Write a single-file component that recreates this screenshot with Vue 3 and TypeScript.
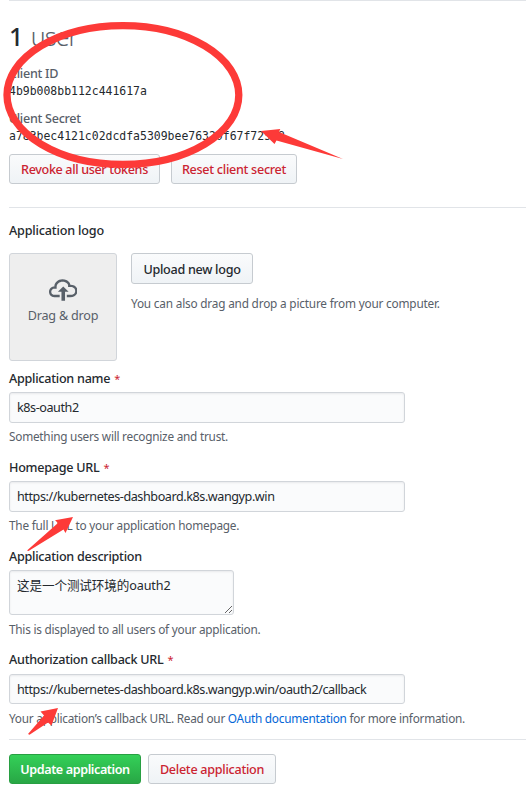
<script setup lang="ts">
interface TextField {
  id: string
  label: string
  value: string
  help: string
}

const clientId = '4b9b008bb112c441617a'
const clientSecret = 'a783bec4121c02dcdfa5309bee76320f67f72508'

const fields: TextField[] = [
  { id: 'name', label: 'Application name', value: 'k8s-oauth2', help: 'Something users will recognize and trust.' },
  { id: 'homepage', label: 'Homepage URL', value: 'https://kubernetes-dashboard.k8s.wangyp.win', help: 'The full URL to your application homepage.' },
]
const description = '这是一个测试环境的oauth2'
const callback = 'https://kubernetes-dashboard.k8s.wangyp.win/oauth2/callback'
</script>

<template>
  <main class="page">
    <section class="credentials">
      <h2 class="count"><strong>1</strong> <span class="count-unit">user</span></h2>
      <dl class="keys">
        <dt>Client ID</dt>
        <dd>{{ clientId }}</dd>
        <dt>Client Secret</dt>
        <dd>{{ clientSecret }}</dd>
      </dl>
      <div class="token-actions">
        <button class="btn danger revoke">Revoke all user tokens</button>
        <button class="btn danger reset">Reset client secret</button>
      </div>
    </section>

    <section class="logo-section">
      <h3 class="label logo-label">Application logo</h3>
      <div class="logo-row">
        <div class="dropzone">
          <svg class="cloud" viewBox="0 2 16 12" width="28.500" height="22">
            <path fill="#586069" d="M7 9H5l3-3 3 3H9v5H7V9zm5-4c0-.44-.91-3-4.500-3C5.080 2 3 3.920 3 6 1.020 6 0 7.520 0 9c0 1.530 1 3 3 3h3v-1.300H3c-1.620 0-1.700-1.420-1.700-1.700 0-.17.05-1.700 1.700-1.700h1.300V6c0-1.390 1.560-2.700 3.200-2.700 2.550 0 3.130 1.550 3.200 1.800v1.200H12c.81 0 2.700.22 2.700 2.200 0 2.090-2.250 2.200-2.700 2.200h-2V12h2c2.080 0 4-1.160 4-3.500C16 6.060 14.080 5 12 5z" />
          </svg>
          <span>Drag &amp; drop</span>
        </div>
        <div class="upload">
          <button class="btn upload-btn">Upload new logo</button>
          <p class="help upload-help">You can also drag and drop a picture from your computer.</p>
        </div>
      </div>
    </section>

    <form class="form" @submit.prevent>
      <div v-for="field in fields" :key="field.id" class="group">
        <label class="label" :for="field.id">{{ field.label }} <i>*</i></label>
        <input :id="field.id" class="control" type="text" :value="field.value" />
        <p class="help" :class="'help-' + field.id">{{ field.help }}</p>
      </div>
      <div class="group group-area">
        <label class="label" for="description">Application description</label>
        <textarea id="description" class="control area" :value="description"></textarea>
        <p class="help help-area">This is displayed to all users of your application.</p>
      </div>
      <div class="group group-callback">
        <label class="label" for="callback">Authorization callback URL <i>*</i></label>
        <input id="callback" class="control" type="text" :value="callback" />
        <p class="help help-callback">Your application’s callback URL. Read our <a>OAuth documentation</a> for more information.</p>
      </div>
      <div class="submit-row">
        <button class="btn primary">Update application</button>
        <button class="btn danger delete">Delete application</button>
      </div>
    </form>

    <svg class="marks" viewBox="0 0 526 798" width="526" height="798">
      <ellipse cx="122.900" cy="95" rx="115.900" ry="69.400" fill="none" stroke="#fd3a38" stroke-width="7.300" />
      <g fill="#fd3a38">
        <path d="M261 131L280.300 129L279 132L343 159L276.500 140.500L274.500 144Z" />
        <path d="M73 517L55 520.300L58 523L27 550.500L28.500 551L63.500 529.500L65.500 533Z" />
        <path d="M58 708L40.500 711.500L44 715.500L28 734L29.500 734.700L48 722.500L51.500 725.500Z" />
      </g>
    </svg>
  </main>
</template>

<style>
body {
  margin: 0;
  background: #fff;
}
</style>

<style scoped>
.page {
  position: relative;
  box-sizing: border-box;
  width: 526px;
  height: 798px;
  overflow: hidden;
  padding-left: 9px;
  color: #24292e;
  font: 12.6px/19px "Noto Sans", "Noto Sans CJK SC", sans-serif;
}
h2, h3, p, dl, dd {
  margin: 0;
}
.credentials {
  box-sizing: border-box;
  height: 208px;
  padding-top: 19px;
  border-top: 1px solid #e1e4e8;
  border-bottom: 1px solid #e1e4e8;
}
.count {
  height: 32px;
  font-size: 25px;
  line-height: 32px;
  font-weight: 400;
}
.count strong {
  font-weight: 500;
}
.count-unit {
  margin-left: 1px;
  color: #586069;
  font-weight: 300;
  letter-spacing: -0.9px;
}
.keys {
  height: 102px;
  padding-top: 13px;
  box-sizing: border-box;
}
.keys dt {
  height: 18px;
  line-height: 18px;
  color: #586069;
  font-weight: 500;
  letter-spacing: -0.28px;
}
.keys dd {
  height: 17px;
  margin-bottom: 10px;
  line-height: 17px;
  font-family: "DejaVu Sans Mono", monospace;
  font-size: 11.460px;
}
.token-actions {
  display: flex;
  gap: 11px;
}
.btn {
  box-sizing: border-box;
  height: 30px;
  padding: 1px 0 0;
  border: 1px solid #c6cbd0;
  border-radius: 3px;
  background: linear-gradient(#fafbfc, #eff3f6);
  color: #24292e;
  font: 500 12.6px/27px "Noto Sans", sans-serif;
  letter-spacing: -0.28px;
  white-space: nowrap;
}
.danger {
  color: #cb2431;
}
.revoke {
  width: 151px;
  letter-spacing: -0.36px;
}
.reset {
  width: 126px;
}
.logo-section {
  height: 161px;
}
.label {
  display: block;
  height: 19px;
  font-size: 12.6px;
  line-height: 19px;
  font-weight: 500;
  letter-spacing: -0.26px;
  white-space: nowrap;
}
.label i {
  margin-left: 1px;
  color: #cb2431;
  font-size: 11px;
  font-style: normal;
  font-weight: 400;
}
.logo-label {
  padding: 13px 0;
  letter-spacing: -0.17px;
}
.logo-row {
  display: flex;
  gap: 14px;
}
.dropzone {
  display: flex;
  box-sizing: border-box;
  flex-direction: column;
  align-items: center;
  width: 108px;
  height: 108px;
  padding-top: 25px;
  border: 1px solid #d1d5da;
  border-radius: 3px;
  background: #eee;
  color: #586069;
}
.dropzone span {
  margin-top: 5px;
  letter-spacing: -0.22px;
}
.upload-btn {
  width: 122px;
  height: 31px;
}
.help {
  height: 18px;
  color: #586069;
  font-size: 11.8px;
  line-height: 18px;
  letter-spacing: -0.24px;
  white-space: nowrap;
}
.upload-help {
  margin-top: 10px;
  letter-spacing: -0.19px;
}
.help-homepage {
  letter-spacing: -0.22px;
}
.group {
  height: 89px;
}
.control {
  display: block;
  box-sizing: border-box;
  width: 396px;
  height: 31px;
  margin: 4px 0;
  padding: 0 7px;
  border: 1px solid #d1d5da;
  border-radius: 3px;
  outline: 0;
  background: #fafbfc;
  box-shadow: inset 0 1px 2px rgba(27, 31, 35, 0.075);
  color: #24292e;
  font: 12.6px/19px "Noto Sans", "Noto Sans CJK SC", sans-serif;
  letter-spacing: -0.43px;
}
.area {
  width: 225px;
  height: 45px;
  margin-bottom: 5px;
  padding-top: 5px;
  overflow: hidden;
  letter-spacing: -0.12px;
  resize: both;
}
.group-area {
  height: 103px;
}
.group-callback {
  height: 89px;
}
.group-callback .control {
  height: 30px;
  margin: 5px 0;
}
.help a {
  color: #0366d6;
}
.submit-row {
  display: flex;
  gap: 7px;
  padding-top: 14px;
  border-top: 1px solid #e1e4e8;
}
.primary {
  width: 132px;
  border-color: #289f42;
  background: linear-gradient(#34d058, #28a745);
  color: #fff;
  font-weight: 600;
  letter-spacing: -0.4px;
}
.delete {
  width: 128px;
}
.marks {
  position: absolute;
  top: 0;
  left: 0;
  pointer-events: none;
}
</style>
